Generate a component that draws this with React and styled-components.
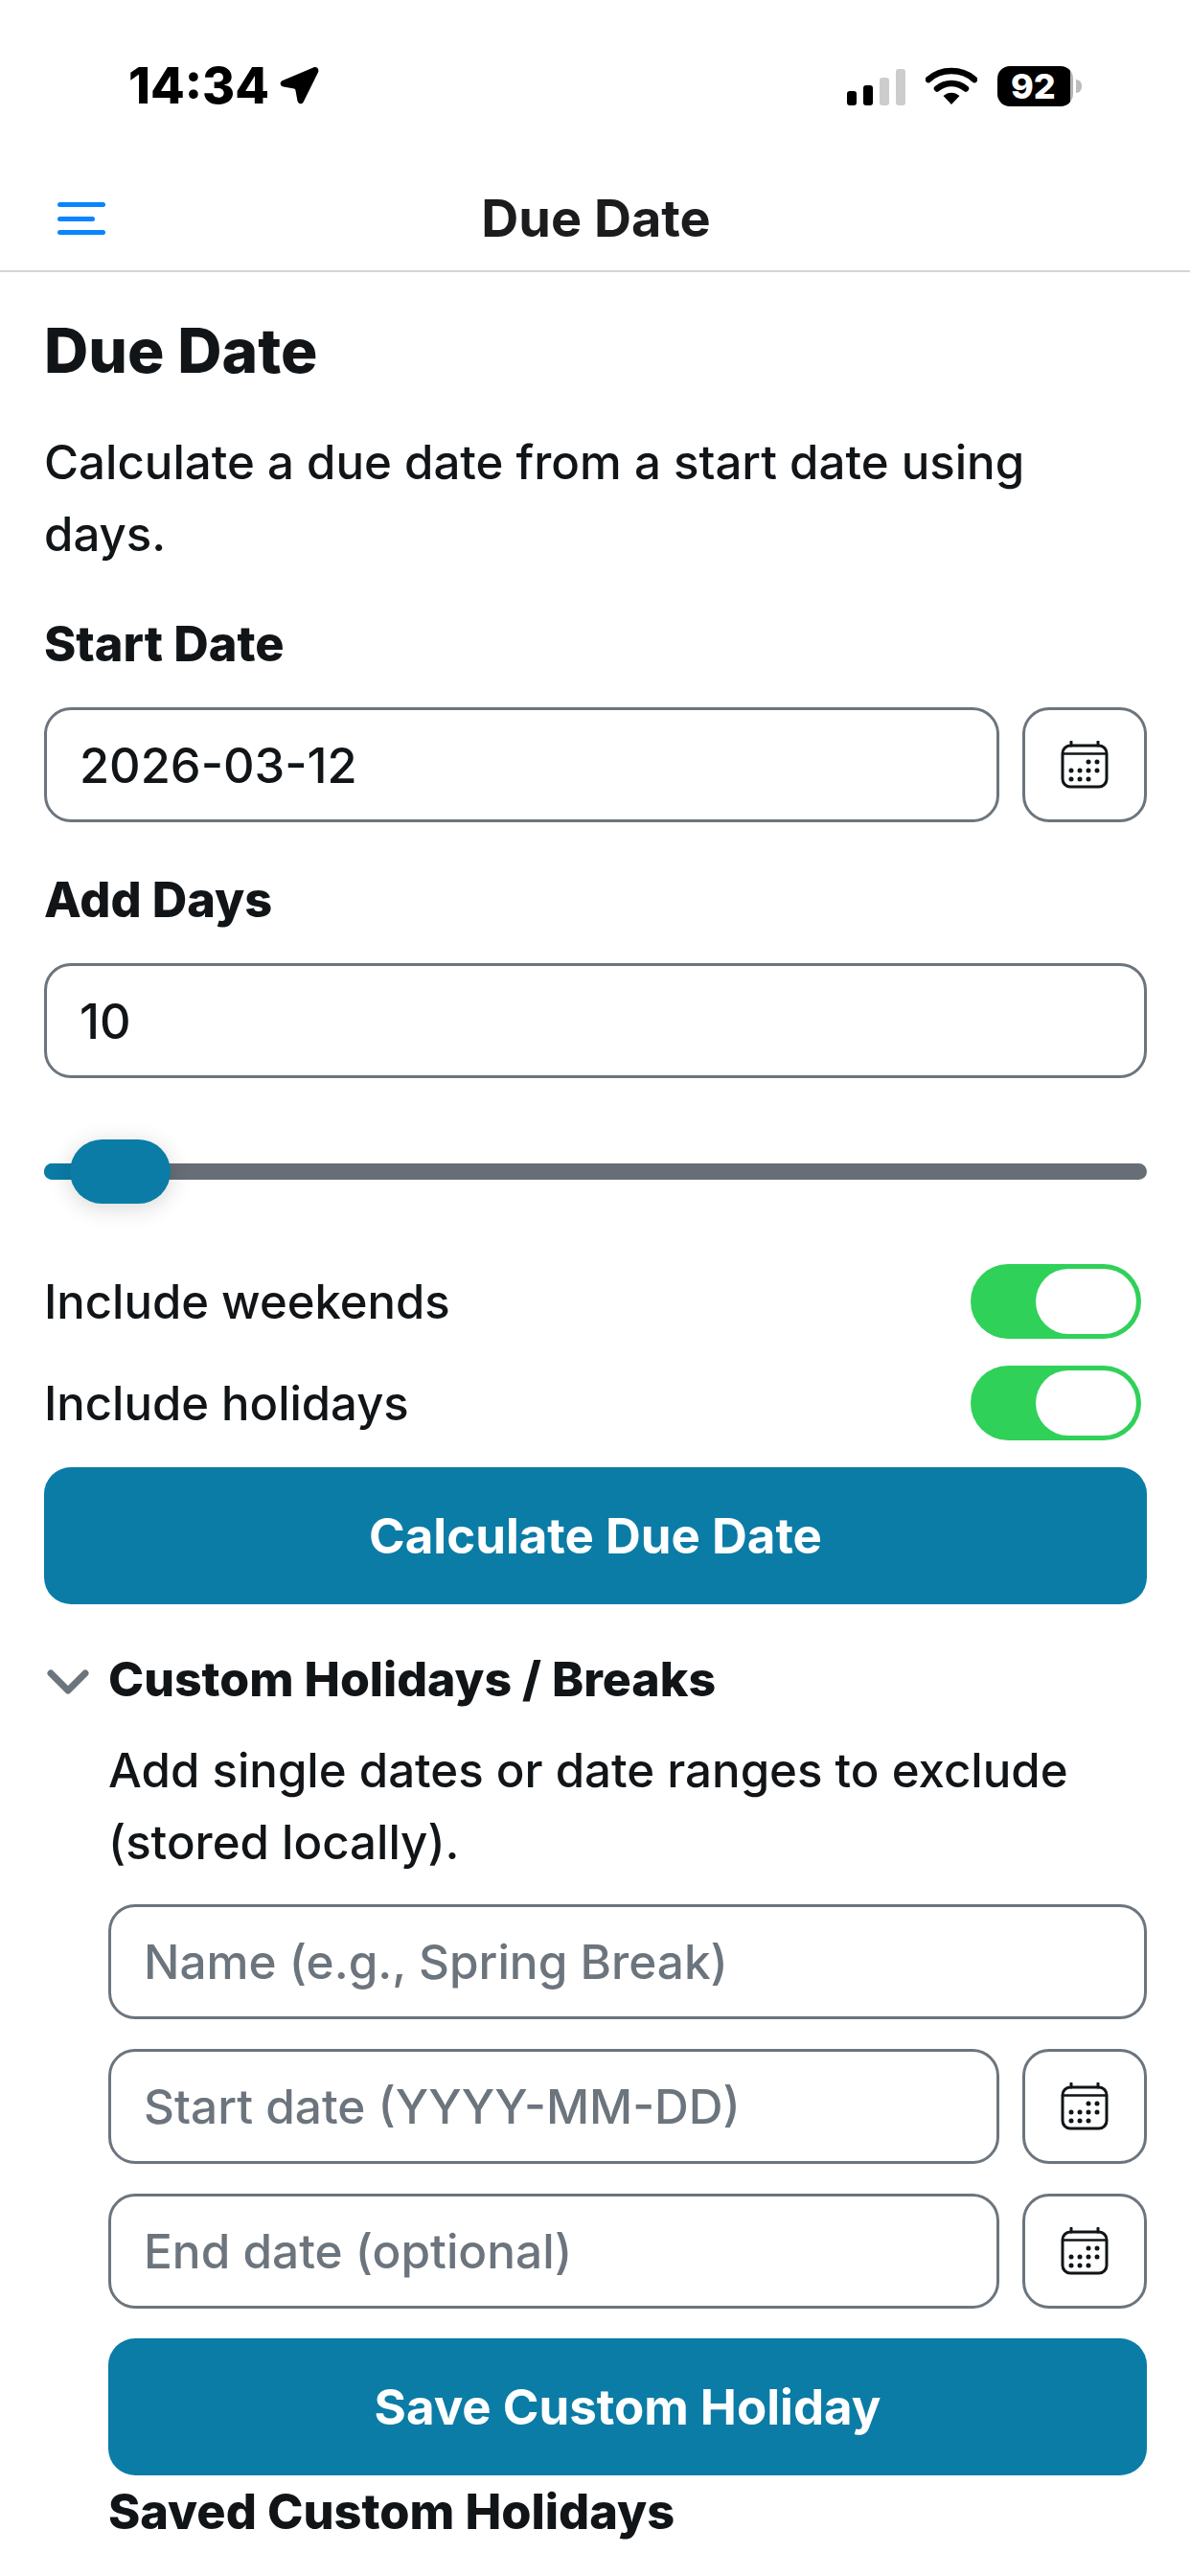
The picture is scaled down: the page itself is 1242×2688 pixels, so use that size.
import React from 'react'
import styled, { createGlobalStyle } from 'styled-components'

const GlobalStyle = createGlobalStyle`
  html, body {
    margin: 0;
    padding: 0;
    background: #fff;
  }
  * {
    box-sizing: border-box;
  }
`

const Page = styled.div`
  width: 1242px;
  height: 2688px;
  overflow: hidden;
  background: #fff;
  color: #111518;
  font-family: Inter, 'Noto Sans', sans-serif;
  font-size: 49.2px;
  font-weight: 500;
`

const StatusBar = styled.div`
  height: 170px;
  padding: 0 122px 0 134px;
  display: flex;
  align-items: flex-start;
  justify-content: space-between;
  color: #000;
`

const Clock = styled.div`
  display: flex;
  align-items: center;
  gap: 10px;
  margin-top: 60px;
  font-size: 52px;
  line-height: 60px;
  font-weight: 800;
`

const StatusIcons = styled.div`
  display: flex;
  align-items: center;
  gap: 21px;
  margin-top: 69px;
`

const Signal = styled.div`
  display: flex;
  align-items: flex-end;
  gap: 7px;
  height: 40px;
`

const SignalBar = styled.span`
  width: 10px;
  height: ${p => p.$h}px;
  border-radius: 3px;
  background: ${p => (p.$on ? '#000' : '#cccccc')};
`

const Battery = styled.div`
  position: relative;
  width: 79px;
  height: 42px;
  border-radius: 13px;
  background: linear-gradient(90deg, #000 0 96%, #b4b4b4 96% 100%);
  color: #fff;
  font-size: 36px;
  line-height: 42px;
  font-weight: 800;
  padding-left: 14px;

  &::after {
    content: '';
    position: absolute;
    right: -9px;
    top: 14px;
    width: 6px;
    height: 14px;
    border-radius: 0 6px 6px 0;
    background: #bdbdbd;
  }
`

const Header = styled.header`
  position: relative;
  height: 114px;
  padding: 2px 0 0 2px;
  display: flex;
  align-items: center;
  justify-content: center;
  border-bottom: 2px solid #d4d4d6;
  font-size: 54px;
  font-weight: 700;
  color: #1c1c1e;
`

const MenuButton = styled.div`
  position: absolute;
  left: 60px;
  top: 41px;
  width: 50px;
  height: 34px;
  display: flex;
  flex-direction: column;
  justify-content: space-between;
`

const MenuLine = styled.span`
  height: 5px;
  width: ${p => p.$w}px;
  border-radius: 3px;
  background: #0a84ff;
`

const Content = styled.main`
  padding: 46px 45px 0 46px;
`

const Title = styled.h1`
  margin: 0 0 43px;
  font-size: 64px;
  line-height: 72px;
  font-weight: 800;
`

const Text = styled.p`
  margin: 0 0 27px;
  line-height: 75px;
`

const Label = styled.div`
  margin: 41px 0 30px;
  font-size: 50.5px;
  line-height: 72px;
  font-weight: 800;
`

const SavedLabel = styled(Label)`
  margin-top: 2px;
`

const FieldRow = styled.div`
  display: flex;
  gap: 24px;
  margin-bottom: ${p => p.$mb ?? 31}px;
`

const Input = styled.div`
  flex: 1;
  height: 120px;
  display: flex;
  align-items: center;
  padding: 0 34px;
  border: 3px solid #6c757d;
  border-radius: 28px;
  background: #fff;
  font-size: ${p => (p.$placeholder ? '49.5px' : '50.5px')};
  color: ${p => (p.$placeholder ? '#6c757d' : '#111518')};
`

const IconButton = styled.div`
  width: 130px;
  height: 120px;
  flex: none;
  display: flex;
  align-items: center;
  justify-content: center;
  border: 3px solid #6c757d;
  border-radius: 28px;
`

const Slider = styled.div`
  position: relative;
  height: 17px;
  margin: 89px 0 88px;
  border-radius: 9px;
  background: #676e75;
`

const SliderFill = styled.div`
  height: 100%;
  width: 80px;
  border-radius: 9px 0 0 9px;
  background: #0b7ca6;
`

const SliderThumb = styled.div`
  position: absolute;
  left: 27px;
  top: -25px;
  width: 105px;
  height: 67px;
  border-radius: 34px;
  background: #0b7ca6;
  box-shadow: 0 4px 24px rgba(0, 0, 0, 0.16);
`

const SwitchRow = styled.div`
  display: flex;
  align-items: center;
  justify-content: space-between;
  height: 78px;
  margin-bottom: 28px;
  padding-right: 6px;
  font-size: 49px;
`

const Switch = styled.div`
  width: 178px;
  height: 78px;
  padding: 5px;
  display: flex;
  justify-content: flex-end;
  border-radius: 39px;
  background: #30d158;
`

const SwitchKnob = styled.div`
  width: 105px;
  height: 68px;
  border-radius: 34px;
  background: #fff;
`

const PrimaryButton = styled.div`
  height: 143px;
  display: flex;
  align-items: center;
  justify-content: center;
  border-radius: 28px;
  background: #0b7ca6;
  color: #fff;
  font-size: 51px;
  font-weight: 700;
`

const SectionHead = styled.div`
  display: flex;
  align-items: center;
  height: 72px;
  margin: 42px 0 22px;
  font-size: 50px;
  font-weight: 800;
`

const Chevron = styled.svg`
  width: 67px;
  height: 40px;
  flex: none;
`

const SectionBody = styled.div`
  padding-left: 67px;
`

const CalendarIcon = () => (
  <svg width="50" height="50" viewBox="0 0 50 50" fill="none">
    <path d="M11 1v4M39 1v4" stroke="#111518" strokeWidth="3" strokeLinecap="round" />
    <rect x="2" y="5" width="46" height="43" rx="8" stroke="#111518" strokeWidth="3" />
    <path d="M2 13.500h46" stroke="#111518" strokeWidth="2.500" />
    {[[29, 22], [38, 22], [11, 31], [20, 31], [29, 31], [38, 31], [11, 40], [20, 40], [29, 40]].map(([x, y]) => (
      <circle key={`${x}-${y}`} cx={x} cy={y} r="2.500" fill="#111518" />
    ))}
  </svg>
)

const DateRow = ({ placeholder, value, mb }) => (
  <FieldRow $mb={mb}>
    <Input $placeholder={placeholder}>{value}</Input>
    <IconButton>
      <CalendarIcon />
    </IconButton>
  </FieldRow>
)

function App() {
  return (
    <Page>
      <GlobalStyle />
      <StatusBar>
        <Clock>
          14:34
          <svg width="42" height="42" viewBox="0 0 42 42">
            <path d="M36 1.500 4 15c-3.500 1.500-3 6 .8 6.500l11 2c.8.1 1.400.8 1.600 1.600l2 11c.6 3.800 5 4.200 6.500.8L41 6.500c1.500-3.500-1.500-6.500-5-5z" fill="#000" />
          </svg>
        </Clock>
        <StatusIcons>
          <Signal>
            <SignalBar $on $h={15} />
            <SignalBar $on $h={21} />
            <SignalBar $h={29} />
            <SignalBar $h={38} />
          </Signal>
          <svg width="54" height="40" viewBox="0 0 54 40" fill="none">
            <path d="M3 13C16 1 38 1 51 13" stroke="#000" strokeWidth="6.500" strokeLinecap="round" />
            <path d="M12 22.500c9-7.500 21-7.500 30 0" stroke="#000" strokeWidth="6.500" strokeLinecap="round" />
            <path d="M18.500 30c5-4.500 12-4.500 17 0L27 39z" fill="#000" />
          </svg>
          <Battery>92</Battery>
        </StatusIcons>
      </StatusBar>

      <Header>
        <MenuButton>
          <MenuLine $w={50} />
          <MenuLine $w={39} />
          <MenuLine $w={50} />
        </MenuButton>
        Due Date
      </Header>

      <Content>
        <Title>Due Date</Title>
        <Text>Calculate a due date from a start date using days.</Text>
        <Label>Start Date</Label>
        <DateRow value="2026-03-12" mb={45} />
        <Label>Add Days</Label>
        <FieldRow $mb={0}>
          <Input>10</Input>
        </FieldRow>
        <Slider>
          <SliderFill />
          <SliderThumb />
        </Slider>
        <SwitchRow>
          Include weekends
          <Switch><SwitchKnob /></Switch>
        </SwitchRow>
        <SwitchRow>
          Include holidays
          <Switch><SwitchKnob /></Switch>
        </SwitchRow>
        <PrimaryButton>Calculate Due Date</PrimaryButton>

        <SectionHead>
          <Chevron viewBox="0 0 67 40" fill="none">
            <path d="M7 14l18 18L43 14" stroke="#6c757d" strokeWidth="7" strokeLinecap="round" strokeLinejoin="round" />
          </Chevron>
          Custom Holidays / Breaks
        </SectionHead>
        <SectionBody>
          <Text>Add single dates or date ranges to exclude (stored locally).</Text>
          <FieldRow>
            <Input $placeholder>Name (e.g., Spring Break)</Input>
          </FieldRow>
          <DateRow placeholder value="Start date (YYYY-MM-DD)" />
          <DateRow placeholder value="End date (optional)" />
          <PrimaryButton>Save Custom Holiday</PrimaryButton>
          <SavedLabel>Saved Custom Holidays</SavedLabel>
        </SectionBody>
      </Content>
    </Page>
  )
}

export default App
